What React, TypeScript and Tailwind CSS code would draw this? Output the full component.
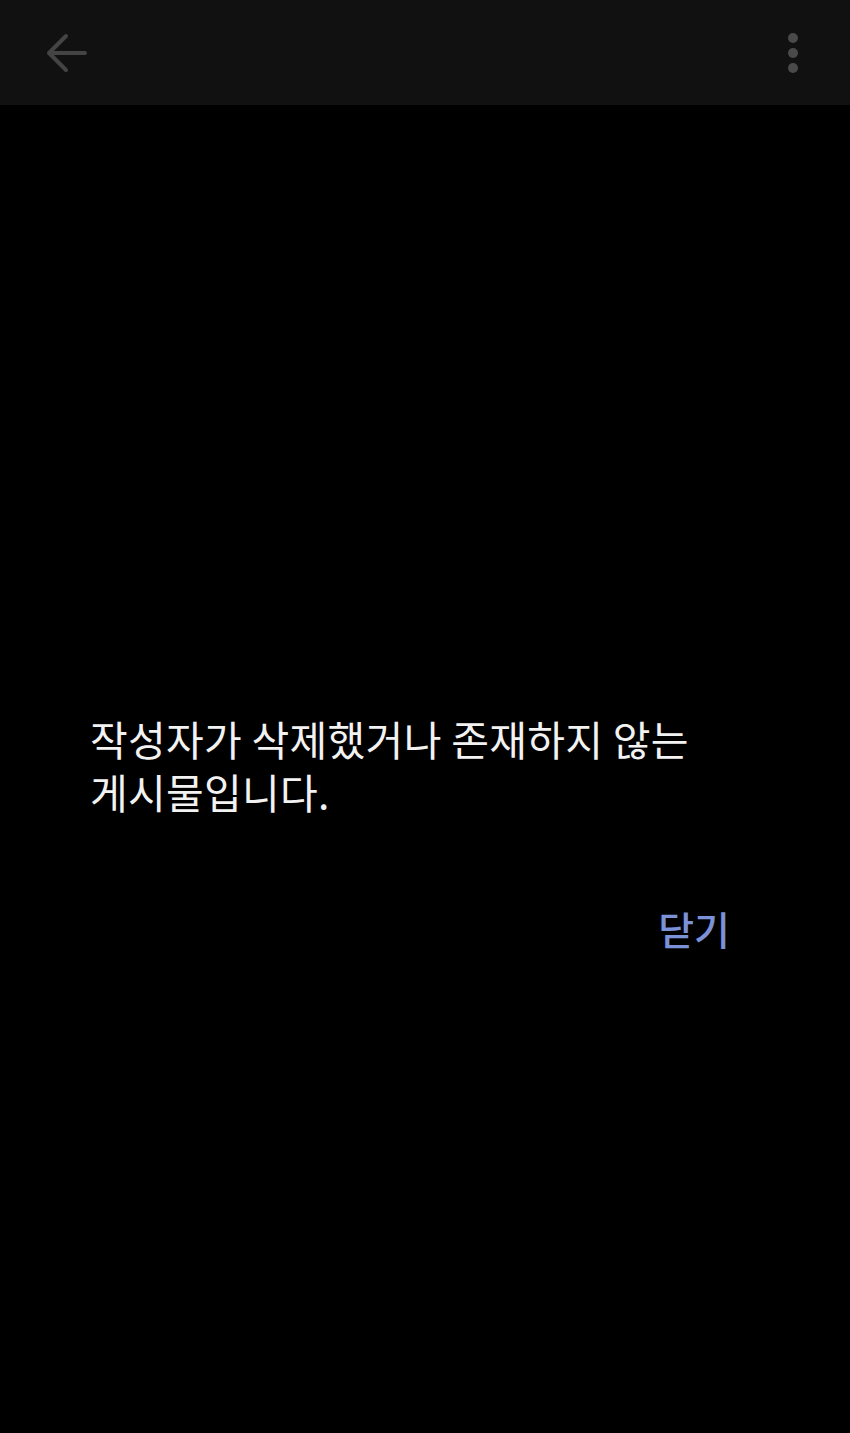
import React from "react";

export default function App() {
  return (
    <div className="w-[850px] h-[1433px] bg-black flex flex-col" style={{ fontFamily: '"Noto Sans CJK KR", "Noto Sans", sans-serif' }}>
      <header className="h-[105px] bg-[#111111] flex items-center justify-between pl-[44px] pr-[52px]">
        <svg width="46" height="46" viewBox="0 0 46 46" fill="none">
          <path d="M41 23H6M22 6L5 23L22 40" stroke="#444444" strokeWidth="4" strokeLinecap="round" strokeLinejoin="round" />
        </svg>
        <div className="flex flex-col items-center gap-[5px]">
          <span className="w-[10px] h-[10px] rounded-full bg-[#4a4a4a]" />
          <span className="w-[10px] h-[10px] rounded-full bg-[#4a4a4a]" />
          <span className="w-[10px] h-[10px] rounded-full bg-[#4a4a4a]" />
        </div>
      </header>
      <main className="flex-1 flex flex-col pt-[607px] pl-[90px] pr-[120px]">
        <p className="text-[41px] leading-[53px] tracking-[0.3px] text-[#f2f2f2]">
          작성자가 삭제했거나 존재하지 않는<br />게시물입니다.
        </p>
        <div className="flex justify-end mt-[84px]">
          <button className="text-[39px] leading-[52px] font-medium text-[#7b91d8]">닫기</button>
        </div>
      </main>
    </div>
  );
}
